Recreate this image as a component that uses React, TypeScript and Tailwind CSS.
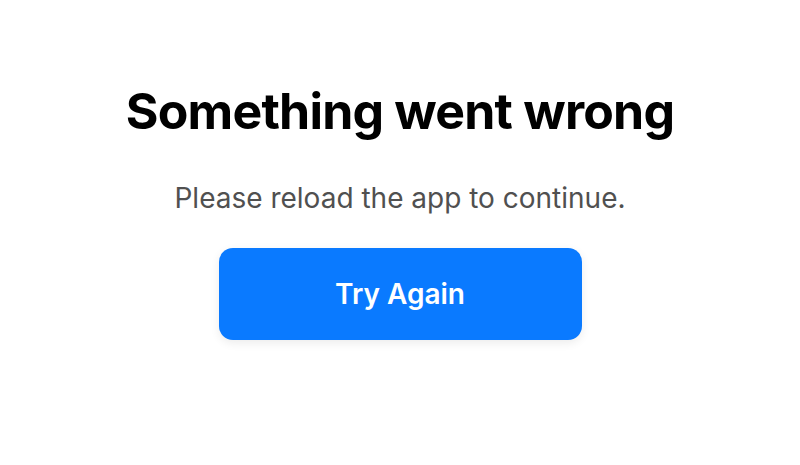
// Fallback screen shown when the app hits an unrecoverable error.
export default function App() {
  return (
    <div className="flex h-[465px] w-full flex-col items-center bg-white pt-[79px] font-['Inter',sans-serif]">
      <h1 className="text-[50px] font-bold leading-[64px] tracking-[-0.8px] text-black">Something went wrong</h1>
      <p className="mt-[38px] text-[28px] leading-[34px] text-[#505050]">Please reload the app to continue.</p>
      <button
        type="button"
        className="mt-[33px] h-[92px] w-[363px] rounded-[14px] bg-[#0a7aff] text-[28px] font-semibold text-white shadow-[0_3px_10px_rgba(0,0,0,0.08)]"
      >
        Try Again
      </button>
    </div>
  );
}
